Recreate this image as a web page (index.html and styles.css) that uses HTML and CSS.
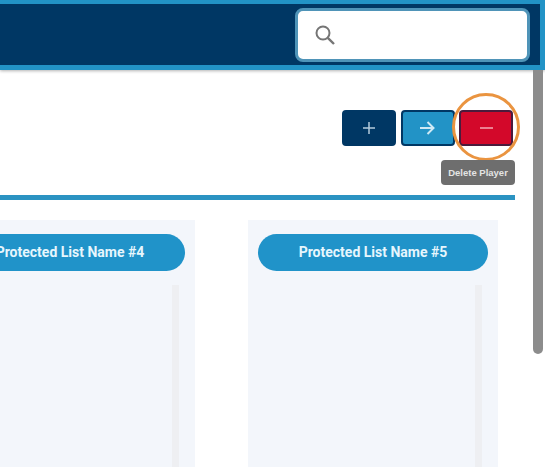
FILE: index.html
```html
<!DOCTYPE html>
<html lang="en">
<head>
    <meta charset="UTF-8">
    <meta name="viewport" content="width=device-width, initial-scale=1.0">
    <title>Protected Lists</title>
    <link rel="stylesheet" href="styles.css">
</head>
<body>
    <header class="topbar">
        <div class="search">
            <svg class="search-icon" width="20" height="20" viewBox="0 0 20 20" fill="none" stroke="#757575" stroke-width="2">
                <circle cx="8" cy="8" r="6.5"/>
                <path d="M12.8 12.8L19 19" stroke-width="2.4"/>
            </svg>
        </div>
    </header>

    <main class="content">
        <div class="toolbar">
            <button class="tool-btn tool-add" type="button">
                <svg width="12" height="12" viewBox="0 0 12 12" fill="none" stroke="#b4cbdc" stroke-width="1.5"><path d="M6 0v12M0 6h12"/></svg>
            </button>
            <button class="tool-btn tool-move" type="button">
                <svg width="15" height="14" viewBox="0 0 15 14" fill="none" stroke="#cfeaf5" stroke-width="2"><path d="M0 7h13.5M7.5 1l6 6-6 6"/></svg>
            </button>
            <button class="tool-btn tool-delete" type="button">
                <svg width="13" height="12" viewBox="0 0 13 12" fill="none" stroke="#f4a9b4" stroke-width="1.5"><path d="M0 6h13"/></svg>
                <span class="highlight-ring"></span>
                <span class="tooltip">Delete Player</span>
            </button>
        </div>
        <div class="divider"></div>

        <div class="lists">
            <section class="list-card">
                <h3 class="list-title">Protected List Name #4</h3>
                <div class="list-body"><div class="list-scroll"></div></div>
            </section>
            <section class="list-card">
                <h3 class="list-title">Protected List Name #5</h3>
                <div class="list-body"><div class="list-scroll"></div></div>
            </section>
        </div>
    </main>

    <div class="page-scroll"></div>
</body>
</html>
```

FILE: styles.css
```css
html, body {
    height: 100%;
}

body {
    margin: 0;
    overflow: hidden;
    background-color: #fff;
    font-family: Roboto, "Liberation Sans", sans-serif;
}

.topbar {
    box-sizing: border-box;
    height: 70px;
    display: flex;
    justify-content: flex-end;
    align-items: center;
    padding-right: 10px;
    background-color: #003764;
    border: solid #2293c6;
    border-width: 4px 5px 5px 0;
    box-shadow: 0 1px 3px rgba(0, 0, 0, 0.3);
}

.search {
    box-sizing: border-box;
    width: 235px;
    height: 54px;
    display: flex;
    align-items: center;
    padding-left: 17px;
    background-color: #fff;
    border: 3px solid #4f94b8;
    border-radius: 8px;
}

.content {
    padding: 40px 30px 0 0;
}

.toolbar {
    display: flex;
    justify-content: flex-end;
    gap: 4.5px;
    padding-right: 2px;
}

.tool-btn {
    position: relative;
    box-sizing: border-box;
    width: 54px;
    height: 36px;
    display: flex;
    justify-content: center;
    align-items: center;
    padding: 0;
    border: 2px solid #003764;
    border-radius: 4px;
    cursor: pointer;
}

.tool-add {
    background-color: #003764;
}

.tool-move {
    background-color: #2293c6;
}

.tool-delete {
    background-color: #d3082a;
    border-color: #4b1b3c;
}

.highlight-ring {
    position: absolute;
    left: -9px;
    top: -19px;
    width: 62px;
    height: 62px;
    border: 3px solid #ea9440;
    border-radius: 50%;
}

.tooltip {
    position: absolute;
    left: -20px;
    top: 48px;
    width: 74px;
    height: 25px;
    line-height: 25px;
    text-align: center;
    background-color: #6e6e6e;
    border-radius: 4px;
    color: #e4e4e4;
    font-size: 9.5px;
    font-weight: 700;
    white-space: nowrap;
}

.divider {
    height: 5px;
    margin-top: 49px;
    background-color: #2b93c2;
}

.lists {
    display: flex;
    justify-content: flex-end;
    gap: 53px;
    margin-top: 20px;
    padding-right: 17px;
}

.list-card {
    flex: 0 0 auto;
    box-sizing: border-box;
    width: 250px;
    height: 247px;
    padding: 14px 10px 0;
    background-color: #f3f6fb;
}

.list-title {
    height: 37px;
    margin: 0;
    line-height: 37px;
    text-align: center;
    background-color: #2093c9;
    border-radius: 19px;
    color: #e6f6fd;
    font-size: 14px;
    font-weight: 700;
}

.list-body {
    display: flex;
    justify-content: flex-end;
    height: 182px;
    margin-top: 14px;
    padding-right: 6px;
}

.list-scroll {
    width: 7px;
    background-color: #eeeff2;
}

.page-scroll {
    position: absolute;
    top: 70px;
    right: 2px;
    width: 10px;
    height: 284px;
    background-color: #8c8c8c;
    border-radius: 0 0 5px 5px;
}
```
